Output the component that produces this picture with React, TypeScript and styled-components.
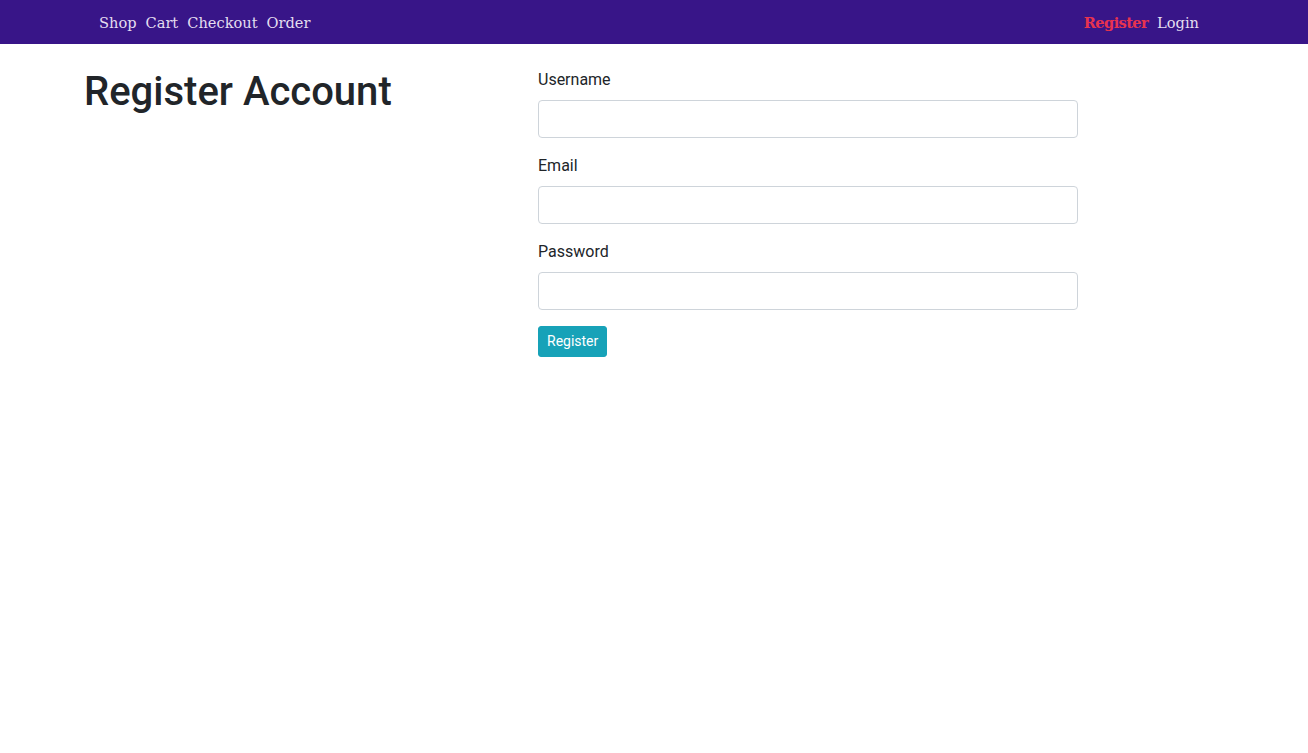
import React from 'react';
import styled, { createGlobalStyle } from 'styled-components';

const GlobalStyle = createGlobalStyle`
    body {
        margin: 0;
        font-family: Roboto, "Liberation Sans", sans-serif;
        color: #212529;
        background: #fff;
    }
    * {
        box-sizing: border-box;
    }
`;

const NavBar = styled.nav`
    height: 44px;
    background-color: #381588;
`;

const NavInner = styled.div`
    max-width: 1140px;
    height: 100%;
    margin: 0 auto;
    padding: 1px 25px 0 15px;
    display: flex;
    align-items: center;
    justify-content: space-between;
`;

const NavGroup = styled.div`
    display: flex;
    align-items: center;
    gap: 9px;
`;

const NavLink = styled.a<{ $active?: boolean }>`
    font-family: "DejaVu Serif", "Liberation Serif", serif;
    font-size: 14.6px;
    line-height: 20px;
    text-decoration: none;
    cursor: pointer;
    color: ${props => props.$active ? '#e8334f' : '#e4def0'};
    font-weight: ${props => props.$active ? 700 : 400};
    letter-spacing: ${props => props.$active ? '-0.6px' : '0'};
`;

const Main = styled.main`
    max-width: 1140px;
    margin: 0 auto;
    padding-top: 24px;
    display: grid;
    grid-template-columns: 454px 540px;
`;

const Title = styled.h1`
    margin: 0;
    font-size: 40px;
    font-weight: 500;
    line-height: 48px;
`;

const Form = styled.form`
    display: flex;
    flex-direction: column;
`;

const FormGroup = styled.div`
    margin-bottom: 16px;
`;

const Label = styled.label`
    display: block;
    margin-bottom: 8px;
    font-size: 16px;
    line-height: 24px;
`;

const Input = styled.input`
    display: block;
    width: 100%;
    height: 38px;
    padding: 6px 12px;
    font-size: 16px;
    font-family: inherit;
    border: 1px solid #ced4da;
    border-radius: 4px;
    background: #fff;
    outline: none;
`;

const Button = styled.button`
    align-self: flex-start;
    height: 31px;
    padding: 4px 8px;
    font-family: inherit;
    font-size: 14px;
    line-height: 21px;
    color: #fff;
    background-color: #17a2b8;
    border: 1px solid #17a2b8;
    border-radius: 3px;
    cursor: pointer;
`;

const fields = [
    { name: 'username', label: 'Username', type: 'text' },
    { name: 'email', label: 'Email', type: 'email' },
    { name: 'password', label: 'Password', type: 'password' },
];

const App = () => {
    return (
        <>
            <GlobalStyle />
            <NavBar>
                <NavInner>
                    <NavGroup>
                        <NavLink>Shop</NavLink>
                        <NavLink>Cart</NavLink>
                        <NavLink>Checkout</NavLink>
                        <NavLink>Order</NavLink>
                    </NavGroup>
                    <NavGroup>
                        <NavLink $active>Register</NavLink>
                        <NavLink>Login</NavLink>
                    </NavGroup>
                </NavInner>
            </NavBar>
            <Main>
                <Title>Register Account</Title>
                <Form onSubmit={e => e.preventDefault()}>
                    {fields.map(field => (
                        <FormGroup key={field.name}>
                            <Label htmlFor={field.name}>{field.label}</Label>
                            <Input id={field.name} name={field.name} type={field.type} />
                        </FormGroup>
                    ))}
                    <Button type="submit">Register</Button>
                </Form>
            </Main>
        </>
    );
};

export default App;
